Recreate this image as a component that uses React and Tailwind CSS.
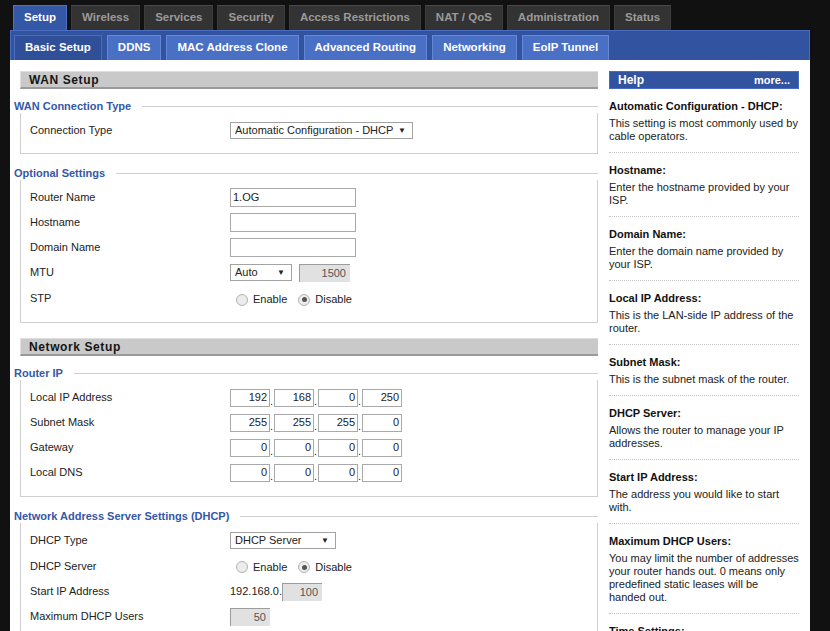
import React from 'react';

const mainTabs = ['Setup', 'Wireless', 'Services', 'Security', 'Access Restrictions', 'NAT / QoS', 'Administration', 'Status'];
const subTabs = ['Basic Setup', 'DDNS', 'MAC Address Clone', 'Advanced Routing', 'Networking', 'EoIP Tunnel'];

const helpItems = [
  { title: 'Automatic Configuration - DHCP:', lines: ['This setting is most commonly used by', 'cable operators.'] },
  { title: 'Hostname:', lines: ['Enter the hostname provided by your', 'ISP.'] },
  { title: 'Domain Name:', lines: ['Enter the domain name provided by', 'your ISP.'] },
  { title: 'Local IP Address:', lines: ['This is the LAN-side IP address of the', 'router.'] },
  { title: 'Subnet Mask:', lines: ['This is the subnet mask of the router.'] },
  { title: 'DHCP Server:', lines: ['Allows the router to manage your IP', 'addresses.'] },
  { title: 'Start IP Address:', lines: ['The address you would like to start', 'with.'] },
  {
    title: 'Maximum DHCP Users:',
    lines: ['You may limit the number of addresses', 'your router hands out. 0 means only', 'predefined static leases will be', 'handed out.']
  },
  { title: 'Time Settings:', lines: ['Choose the time zone you are in.'] }
];

function SectionBar({ title }) {
  return (
    <div className="ml-[6px] flex h-[18px] items-center border-t border-l border-t-[#dedede] border-l-[#dedede] border-b-2 border-b-[#9a9a9a] bg-[#c9c9c9] pl-[8px] text-[12px] font-bold tracking-[0.6px] text-[#151515]">
      {title}
    </div>
  );
}

function Fieldset({ legend, className, children }) {
  return (
    <div className={className}>
      <div className="flex h-[13px] items-center">
        <span className="whitespace-nowrap text-[11px] font-bold leading-[13px] text-[#3458a6]">{legend}</span>
        <div className="ml-[11px] h-px flex-1 bg-[#cfcfcf]" />
      </div>
      <div className="ml-[6px] border-r border-b border-l border-[#cfcfcf] pl-[9px]">{children}</div>
    </div>
  );
}

function Row({ label, children, className = '' }) {
  return (
    <div className={`flex h-[25px] items-center ${className}`}>
      <div className="w-[200px] text-[#222]">{label}</div>
      <div className="flex items-center">{children}</div>
    </div>
  );
}

function Select({ value, width }) {
  return (
    <div className={`flex h-[17px] items-center justify-between border border-[#a3a3a3] bg-white pr-[6px] pl-[4px] text-[#222] ${width}`}>
      <span>{value}</span>
      <span className="text-[8px] text-[#222]">▼</span>
    </div>
  );
}

function TextInput({ value = '' }) {
  return <div className="flex h-[19px] w-[126px] items-center border border-[#a9a9a9] bg-white pl-[2px] text-[#222]">{value}</div>;
}

function Disabled({ value, width }) {
  return (
    <div className={`flex h-[18px] items-center justify-end border-t border-l border-[#9c9c9c] bg-[#e1e1e1] pr-[4px] text-[#555] ${width}`}>
      {value}
    </div>
  );
}

function IpBox({ value }) {
  return <div className="flex h-[18px] w-[40px] items-center justify-end border border-[#a9a9a9] bg-white pr-[2px] text-[#222]">{value}</div>;
}

function IpInput({ parts }) {
  return (
    <div className="flex items-end">
      {parts.map((p, i) => (
        <React.Fragment key={i}>
          <IpBox value={p} />
          {i < 3 && <span className="w-[4px] text-[#222] leading-[12px]">.</span>}
        </React.Fragment>
      ))}
    </div>
  );
}

function Radio({ checked, label }) {
  return (
    <div className="flex items-center">
      <span className="flex h-[12px] w-[12px] items-center justify-center rounded-full border border-[#b3b3b3] bg-[#ececec]">
        {checked && <span className="h-[5px] w-[5px] rounded-full bg-[#555]" />}
      </span>
      <span className="ml-[5px] text-[#222]">{label}</span>
    </div>
  );
}

function EnableDisable() {
  return (
    <div className="flex items-center gap-[11px] pl-[6px] pt-[2px]">
      <Radio label="Enable" />
      <Radio checked label="Disable" />
    </div>
  );
}

export default function App() {
  return (
    <div className="h-[631px] overflow-hidden bg-[#111] font-['Liberation_Sans',Arial,sans-serif] text-[11px]">
      <div className="ml-[10px] w-[800px]">
        <div className="flex gap-[4px] pt-[5px] pl-[3px]">
          {mainTabs.map((t, i) => (
            <div
              key={t}
              className={
                i === 0
                  ? 'flex h-[25px] items-center border-t border-r border-l border-[#4d71c4] bg-[#3457a6] px-[10px] text-[11.5px] font-bold text-white'
                  : 'flex h-[25px] items-center border-t border-r border-l border-t-[#4a4a4a] border-r-[#3c3c3c] border-l-[#3c3c3c] bg-[#333] px-[10px] text-[11.5px] font-bold text-[#9a9a9a]'
              }
            >
              {t}
            </div>
          ))}
        </div>
        <div className="flex h-[30px] items-end gap-[5px] border-t border-r border-l border-[#4a6cc0] bg-[#3253a0] pl-[3px]">
          {subTabs.map((t, i) => (
            <div
              key={t}
              className={
                i === 0
                  ? 'flex h-[25px] items-center border-t border-r border-l border-[#4a6cc0] bg-[#2f4f98] px-[10px] text-[11.5px] font-bold text-white'
                  : 'flex h-[25px] items-center border-t border-r border-l border-[#6288d6] bg-[#4a70c6] px-[10px] text-[11.5px] font-bold text-white'
              }
            >
              {t}
            </div>
          ))}
        </div>
        <div className="flex gap-[11px] bg-white pt-[11px] pl-[4px]">
          <div className="w-[584px]">
            <SectionBar title="WAN Setup" />
            <Fieldset legend="WAN Connection Type" className="mt-[11px]">
              <div className="pt-[5px] pb-[10px]">
                <Row label="Connection Type">
                  <Select value="Automatic Configuration - DHCP" width="w-[183px]" />
                </Row>
              </div>
            </Fieldset>
            <Fieldset legend="Optional Settings" className="mt-[13px]">
              <div className="pt-[5px] pb-[10px]">
                <Row label="Router Name">
                  <TextInput value="1.OG" />
                </Row>
                <Row label="Hostname">
                  <TextInput />
                </Row>
                <Row label="Domain Name">
                  <TextInput />
                </Row>
                <Row label="MTU">
                  <Select value="Auto" width="w-[62px]" />
                  <div className="ml-[7px]">
                    <Disabled value="1500" width="w-[51px]" />
                  </div>
                </Row>
                <Row label="STP" className="h-[27px]">
                  <EnableDisable />
                </Row>
              </div>
            </Fieldset>
            <div className="mt-[15px]">
              <SectionBar title="Network Setup" />
            </div>
            <Fieldset legend="Router IP" className="mt-[11px]">
              <div className="pt-[5px] pb-[11px]">
                <Row label="Local IP Address">
                  <IpInput parts={['192', '168', '0', '250']} />
                </Row>
                <Row label="Subnet Mask">
                  <IpInput parts={['255', '255', '255', '0']} />
                </Row>
                <Row label="Gateway">
                  <IpInput parts={['0', '0', '0', '0']} />
                </Row>
                <Row label="Local DNS">
                  <IpInput parts={['0', '0', '0', '0']} />
                </Row>
              </div>
            </Fieldset>
            <Fieldset legend="Network Address Server Settings (DHCP)" className="mt-[13px]">
              <div className="pt-[5px] pb-[11px]">
                <Row label="DHCP Type">
                  <Select value="DHCP Server" width="w-[106px]" />
                </Row>
                <Row label="DHCP Server" className="h-[26px]">
                  <EnableDisable />
                </Row>
                <Row label="Start IP Address">
                  <span className="text-[#222]">192.168.0.</span>
                  <Disabled value="100" width="w-[40px]" />
                </Row>
                <Row label="Maximum DHCP Users">
                  <Disabled value="50" width="w-[40px]" />
                </Row>
              </div>
            </Fieldset>
          </div>
          <div className="w-[190px]">
            <div className="flex h-[18px] items-center justify-between border border-[#4a6cc0] bg-[#3253a0] pr-[8px] pl-[8px] font-bold text-white">
              <span className="text-[12px]">Help</span>
              <span className="text-[11px]">more...</span>
            </div>
            {helpItems.map((h) => (
              <div key={h.title} className="border-b border-dotted border-[#c4c4c4] pt-[11px] pb-[9px]">
                <div className="mb-[4px] whitespace-nowrap font-bold leading-[13px] text-[#111]">{h.title}</div>
                {h.lines.map((l) => (
                  <div key={l} className="whitespace-nowrap leading-[13px] text-[#222]">
                    {l}
                  </div>
                ))}
              </div>
            ))}
          </div>
        </div>
      </div>
    </div>
  );
}
